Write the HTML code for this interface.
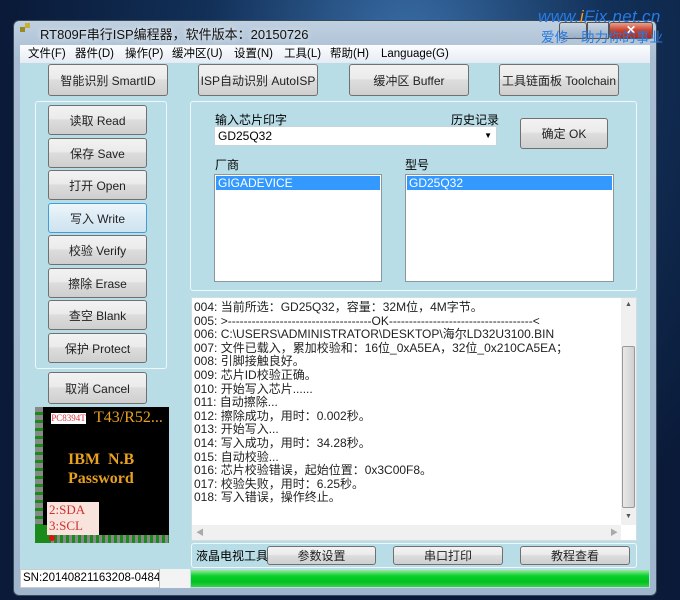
<!DOCTYPE html>
<html><head><meta charset="utf-8"><style>
*{box-sizing:border-box;margin:0;padding:0}
body{width:680px;height:600px;overflow:hidden;position:relative;font-family:"Liberation Sans","Noto Sans CJK SC",sans-serif;font-size:12px;color:#000;
background:radial-gradient(ellipse at 60% 10%,#3a6fa8 0%,#123058 35%,#0a1a38 70%),#0b1e40;}
.a{position:absolute}
.btn{position:absolute;border:1px solid #707070;border-radius:3px;background:linear-gradient(#f2f2f2,#ebebeb 45%,#dddddd 50%,#cfcfcf);text-align:center;font-size:12px;color:#222;display:flex;align-items:center;justify-content:center;white-space:nowrap}
.grp{position:absolute;border:1px solid #eef8fb;border-radius:3px}
.list{position:absolute;background:#fff;border:1px solid #8a97a3}
.sel{background:#3399ff;color:#fff;height:14px;line-height:14px;padding-left:2px;margin:1px}
.log div{height:13.6px;line-height:13.6px;white-space:nowrap}
.m{position:absolute;top:0}
</style></head><body>
<div class="a" style="left:13px;top:20px;width:644px;height:576px;border:1px solid #3b4a5a;border-radius:6px;background:linear-gradient(#bfd0e0,#a8bdd2 40px,#9fb6cc);"></div>
<div class="a" style="left:20px;top:23px;width:10px;height:10px;"><div class="a" style="left:0;top:4px;width:5px;height:5px;background:#9a8a20"></div><div class="a" style="left:5px;top:0;width:5px;height:5px;background:#c8b030"></div></div>
<div class="a" style="left:40px;top:24px;font-size:13px;color:#111;text-shadow:0 0 6px #fff">RT809F串行ISP编程器，软件版本：20150726</div>
<div class="a" style="left:559px;top:22px;width:28px;height:17px;border:1px solid #555;border-radius:3px;background:linear-gradient(#c9d6e3,#9aaec4)"></div>
<div class="a" style="left:587px;top:22px;width:22px;height:17px;border:1px solid #555;background:linear-gradient(#c9d6e3,#9aaec4)"></div>
<div class="a" style="left:609px;top:22px;width:44px;height:17px;border:1px solid #555;border-radius:3px;background:linear-gradient(#e8a090,#c8402a 50%,#b02a18);color:#fff;text-align:center;font-weight:bold;line-height:15px">✕</div>
<div class="a" style="left:538px;top:7px;font-size:17px;font-style:italic;color:#2a7ae0;letter-spacing:0.3px">www.<span style="color:#f0a020">i</span>Fix.net.cn</div>
<div class="a" style="left:541px;top:26px;font-size:13.5px;color:#2a7ae0;letter-spacing:0.2px">爱修 · 助力你的事业</div>
<div class="a" style="left:20px;top:45px;width:630px;height:543px;background:#b9dde6"></div>
<div class="a" style="left:20px;top:45px;width:630px;height:18px;background:linear-gradient(#fbfcfe,#e6ecf4);font-size:11.5px;line-height:18px">
<span class="m" style="left:8px">文件(F)</span><span class="m" style="left:55px">器件(D)</span><span class="m" style="left:105px">操作(P)</span><span class="m" style="left:152px">缓冲区(U)</span><span class="m" style="left:214px">设置(N)</span><span class="m" style="left:264px">工具(L)</span><span class="m" style="left:310px">帮助(H)</span><span class="m" style="left:361px">Language(G)</span></div>
<div class="btn" style="left:48px;top:64px;width:120px;height:32px">智能识别 SmartID</div>
<div class="btn" style="left:198px;top:64px;width:120px;height:32px">ISP自动识别 AutoISP</div>
<div class="btn" style="left:349px;top:64px;width:120px;height:32px">缓冲区 Buffer</div>
<div class="btn" style="left:499px;top:64px;width:120px;height:32px">工具链面板 Toolchain</div>
<div class="grp" style="left:35px;top:101px;width:132px;height:268px"></div>
<div class="btn" style="left:48px;top:105px;width:99px;height:30px">读取 Read</div>
<div class="btn" style="left:48px;top:138px;width:99px;height:30px">保存 Save</div>
<div class="btn" style="left:48px;top:170px;width:99px;height:30px">打开 Open</div>
<div class="btn" style="left:48px;top:203px;width:99px;height:30px;border:1px solid #3c9fd8;background:linear-gradient(#eef6fb,#dcebf5 50%,#cfe3f0)">写入 Write</div>
<div class="btn" style="left:48px;top:235px;width:99px;height:30px">校验 Verify</div>
<div class="btn" style="left:48px;top:268px;width:99px;height:30px">擦除 Erase</div>
<div class="btn" style="left:48px;top:300px;width:99px;height:30px">查空 Blank</div>
<div class="btn" style="left:48px;top:333px;width:99px;height:30px">保护 Protect</div>
<div class="btn" style="left:48px;top:372px;width:99px;height:32px">取消 Cancel</div>
<div class="a" style="left:35px;top:407px;width:134px;height:136px;background:#000;overflow:hidden;font-family:'Liberation Serif',serif">
<div class="a" style="left:0;top:0;width:8px;height:136px;background:repeating-linear-gradient(#888 0 5px,#1a8a1a 5px 8px)"></div>
<div class="a" style="left:16px;top:128px;width:118px;height:8px;background:repeating-linear-gradient(90deg,#888 0 3px,#1a8a1a 3px 6px)"></div>
<div class="a" style="left:0;top:118px;width:16px;height:18px;background:#1a8a1a"></div>
<div class="a" style="left:16px;top:6px;width:35px;height:11px;background:#fff;color:#e0303a;font-size:9px;line-height:11px;text-align:center">PC8394T</div>
<div class="a" style="left:59px;top:2px;color:#e8a020;font-size:16px">T43/R52...</div>
<div class="a" style="left:33px;top:44px;color:#e8a020;font-size:16px;font-weight:bold">IBM&nbsp; N.B</div>
<div class="a" style="left:33px;top:63px;color:#e8a020;font-size:16px;font-weight:bold">Password</div>
<div class="a" style="left:12px;top:95px;width:52px;height:33px;background:#f8e4dc;color:#d03030;font-size:13px;line-height:16px;padding-left:2px">2:SDA<br>3:SCL</div>
<div class="a" style="left:14px;top:128px;width:6px;height:6px;border-radius:3px;background:#e01010"></div>
</div>
<div class="grp" style="left:190px;top:101px;width:447px;height:190px"></div>
<div class="a" style="left:215px;top:111px">输入芯片印字</div>
<div class="a" style="left:451px;top:111px">历史记录</div>
<div class="a" style="left:214px;top:126px;width:283px;height:20px;background:#fff;border:1px solid #c8d4dc;line-height:18px;padding-left:3px">GD25Q32<span style="position:absolute;right:4px;top:0;font-size:8px">▼</span></div>
<div class="btn" style="left:520px;top:118px;width:88px;height:31px">确定 OK</div>
<div class="a" style="left:215px;top:156px">厂商</div>
<div class="a" style="left:405px;top:156px">型号</div>
<div class="list" style="left:214px;top:174px;width:168px;height:108px"><div class="sel">GIGADEVICE</div></div>
<div class="list" style="left:405px;top:174px;width:209px;height:108px"><div class="sel">GD25Q32</div></div>
<div class="a log" style="left:191px;top:297px;width:446px;height:244px;background:#fff;border:1px solid #d0dde3;padding:3px 0 0 2px;font-size:12px;color:#222">
<div>004: 当前所选：GD25Q32，容量：32M位，4M字节。</div>
<div>005: &gt;------------------------------------OK------------------------------------&lt;</div>
<div>006: C:\USERS\ADMINISTRATOR\DESKTOP\海尔LD32U3100.BIN</div>
<div>007: 文件已载入，累加校验和：16位_0xA5EA，32位_0x210CA5EA；</div>
<div>008: 引脚接触良好。</div>
<div>009: 芯片ID校验正确。</div>
<div>010: 开始写入芯片......</div>
<div>011: 自动擦除...</div>
<div>012: 擦除成功，用时：0.002秒。</div>
<div>013: 开始写入...</div>
<div>014: 写入成功，用时：34.28秒。</div>
<div>015: 自动校验...</div>
<div>016: 芯片校验错误，起始位置：0x3C00F8。</div>
<div>017: 校验失败，用时：6.25秒。</div>
<div>018: 写入错误，操作终止。</div>
</div>
<div class="a" style="left:621px;top:298px;width:15px;height:227px;background:#f0f0f0"></div>
<div class="a" style="left:622px;top:346px;width:13px;height:162px;border:1px solid #999;border-radius:2px;background:linear-gradient(90deg,#e8e8e8,#d0d0d0)"></div>
<div class="a" style="left:625px;top:301px;font-size:7px;color:#555">▲</div>
<div class="a" style="left:625px;top:513px;font-size:7px;color:#555">▼</div>
<div class="a" style="left:192px;top:525px;width:429px;height:15px;background:#f0f0f0"></div>
<div class="a" style="left:196px;top:527px;font-size:8px;color:#aaa">◀</div>
<div class="a" style="left:610px;top:527px;font-size:8px;color:#aaa">▶</div>
<div class="grp" style="left:191px;top:543px;width:446px;height:25px"></div>
<div class="a" style="left:196px;top:547px">液晶电视工具</div>
<div class="btn" style="left:267px;top:546px;width:109px;height:19px">参数设置</div>
<div class="btn" style="left:393px;top:546px;width:110px;height:19px">串口打印</div>
<div class="btn" style="left:520px;top:546px;width:110px;height:19px">教程查看</div>
<div class="a" style="left:20px;top:569px;width:170px;height:19px;background:#fff;border:1px solid #ccc;line-height:17px;padding-left:2px;font-size:11.5px;overflow:hidden;white-space:nowrap">SN:20140821163208-0484</div>
<div class="a" style="left:159px;top:569px;width:31px;height:19px;background:#f3f3f3;border-left:1px solid #bbb"></div>
<div class="a" style="left:191px;top:570px;width:458px;height:17px;background:linear-gradient(#9ee8a0,#06d12a 35%,#04c01e 70%,#3bd04a)"></div>
</body></html>
